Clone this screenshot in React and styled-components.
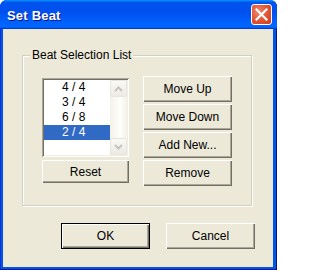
import React from "react";
import styled, { createGlobalStyle, css } from "styled-components";

const Global = createGlobalStyle`
  html, body { margin: 0; padding: 0; background: #ffffff; }
  body { font-family: "Liberation Sans", Arial, sans-serif; }
  #root { width: 277px; height: 270px; }
`;

const Window = styled.div`
  width: 277px;
  height: 270px;
  box-sizing: border-box;
  display: flex;
  flex-direction: column;
  background: #0055e5;
  border-radius: 7px 7px 0 0;
  box-shadow: inset -1px -1px #00138c, inset 1px 0 #0831d9;
  overflow: hidden;
`;

const TitleBar = styled.div`
  height: 29px;
  flex: 0 0 29px;
  box-sizing: border-box;
  display: flex;
  align-items: center;
  justify-content: space-between;
  padding: 2px 5px 0 7px;
  background: linear-gradient(
    180deg,
    #0997ff,
    #0053ee 8%,
    #0050ee 40%,
    #06f 88%,
    #06f 93%,
    #005bff 95%,
    #003dd7 96%,
    #003dd7
  );
`;

const Title = styled.span`
  font-family: "Liberation Sans", Arial, sans-serif;
  font-weight: bold;
  font-size: 13px;
  color: #ffffff;
  text-shadow: 1px 1px #0f1089;
  letter-spacing: 0.2px;
`;

const CloseButton = styled.div`
  width: 21px;
  height: 21px;
  box-sizing: border-box;
  margin-top: -3px;
  border: 1px solid #ffffff;
  border-radius: 3px;
  background: radial-gradient(circle at 35% 35%, #f0876d 0%, #e35a3b 45%, #c93c1d 100%);
  display: flex;
  align-items: center;
  justify-content: center;
`;

const Client = styled.div`
  flex: 1;
  margin: 0 4px 3px 3px;
  background: #ece9d8;
  display: flex;
  flex-direction: column;
  padding: 26px 0 0 19px;
  box-sizing: border-box;
`;

const GroupBox = styled.div`
  position: relative;
  width: 230px;
  height: 151px;
  box-sizing: border-box;
  border: 1px solid #d0d0bf;
  box-shadow: inset 1px 1px #ffffff, 1px 1px #ffffff;
  padding: 20px 0 0 19px;
`;

const GroupLabel = styled.span`
  position: absolute;
  left: 7px;
  top: -8px;
  padding: 0 2px;
  background: #ece9d8;
  font-size: 12px;
  line-height: 14px;
  color: #000000;
`;

const GroupBody = styled.div`
  display: flex;
  align-items: flex-start;
`;

const LeftColumn = styled.div`
  display: flex;
  flex-direction: column;
  gap: 3px;
  margin-top: 2px;
`;

const RightColumn = styled.div`
  display: flex;
  flex-direction: column;
  gap: 2px;
  margin-left: 14px;
`;

const ListBox = styled.div`
  width: 87px;
  height: 79px;
  box-sizing: border-box;
  padding: 2px;
  display: flex;
  background: #ffffff;
  box-shadow: inset 1px 1px #aca899, inset -1px -1px #ffffff,
    inset 2px 2px #716f64, inset -2px -2px #f1efe2;
`;

const Items = styled.div`
  flex: 1;
  display: flex;
  flex-direction: column;
`;

const Item = styled.div`
  height: 15px;
  line-height: 15px;
  font-size: 12px;
  padding-left: 18px;
  color: ${(p) => (p.$selected ? "#ffffff" : "#000000")};
  background: ${(p) => (p.$selected ? "#316ac5" : "transparent")};
`;

const ScrollBar = styled.div`
  width: 17px;
  display: flex;
  flex-direction: column;
  background: linear-gradient(90deg, #f3f1ec, #fefefb 60%, #f3f1ec);
`;

const ScrollButton = styled.div`
  width: 17px;
  height: 17px;
  box-sizing: border-box;
  border: 1px solid #e6e5de;
  border-radius: 2px;
  background: linear-gradient(180deg, #f9f9f6, #eceae3);
  display: flex;
  align-items: center;
  justify-content: center;
`;

const Track = styled.div`
  flex: 1;
`;

const Button = styled.button`
  width: ${(p) => p.$w || 89}px;
  height: ${(p) => p.$h || 26}px;
  box-sizing: border-box;
  margin: 0;
  padding: 0;
  font-family: "Liberation Sans", Arial, sans-serif;
  font-size: 12px;
  color: #000000;
  background: #ece9d8;
  border: none;
  border-radius: 0;
  box-shadow: inset 1px 1px #ffffff, inset -1px -1px #716f64,
    inset -2px -2px #aca899;
  ${(p) =>
    p.$default &&
    css`
      border: 1px solid #000000;
    `}
`;

const Footer = styled.div`
  display: flex;
  gap: 16px;
  margin: 17px 0 0 39px;
`;

const UpIcon = () => (
  <svg width="9" height="6" viewBox="0 0 9 6">
    <polyline points="1,5 4.5,1.5 8,5" fill="none" stroke="#c5c4bc" strokeWidth="2" />
  </svg>
);

const DownIcon = () => (
  <svg width="9" height="6" viewBox="0 0 9 6">
    <polyline points="1,1 4.5,4.5 8,1" fill="none" stroke="#c5c4bc" strokeWidth="2" />
  </svg>
);

const items = ["4 / 4", "3 / 4", "6 / 8", "2 / 4"];

export default function App() {
  return (
    <>
      <Global />
      <Window>
        <TitleBar>
          <Title>Set Beat</Title>
          <CloseButton>
            <svg width="13" height="13" viewBox="0 0 13 13">
              <path d="M1.5 1.5 L11.5 11.5 M11.5 1.5 L1.5 11.5" stroke="#ffffff" strokeWidth="2.2" strokeLinecap="square" />
            </svg>
          </CloseButton>
        </TitleBar>
        <Client>
          <GroupBox>
            <GroupLabel>Beat Selection List</GroupLabel>
            <GroupBody>
              <LeftColumn>
                <ListBox>
                  <Items>
                    {items.map((it, i) => (
                      <Item key={it} $selected={i === 3}>
                        {it}
                      </Item>
                    ))}
                  </Items>
                  <ScrollBar>
                    <ScrollButton>
                      <UpIcon />
                    </ScrollButton>
                    <Track />
                    <ScrollButton>
                      <DownIcon />
                    </ScrollButton>
                  </ScrollBar>
                </ListBox>
                <Button $w={87} $h={23}>Reset</Button>
              </LeftColumn>
              <RightColumn>
                <Button>Move Up</Button>
                <Button>Move Down</Button>
                <Button>Add New...</Button>
                <Button>Remove</Button>
              </RightColumn>
            </GroupBody>
          </GroupBox>
          <Footer>
            <Button $default>OK</Button>
            <Button>Cancel</Button>
          </Footer>
        </Client>
      </Window>
    </>
  );
}
